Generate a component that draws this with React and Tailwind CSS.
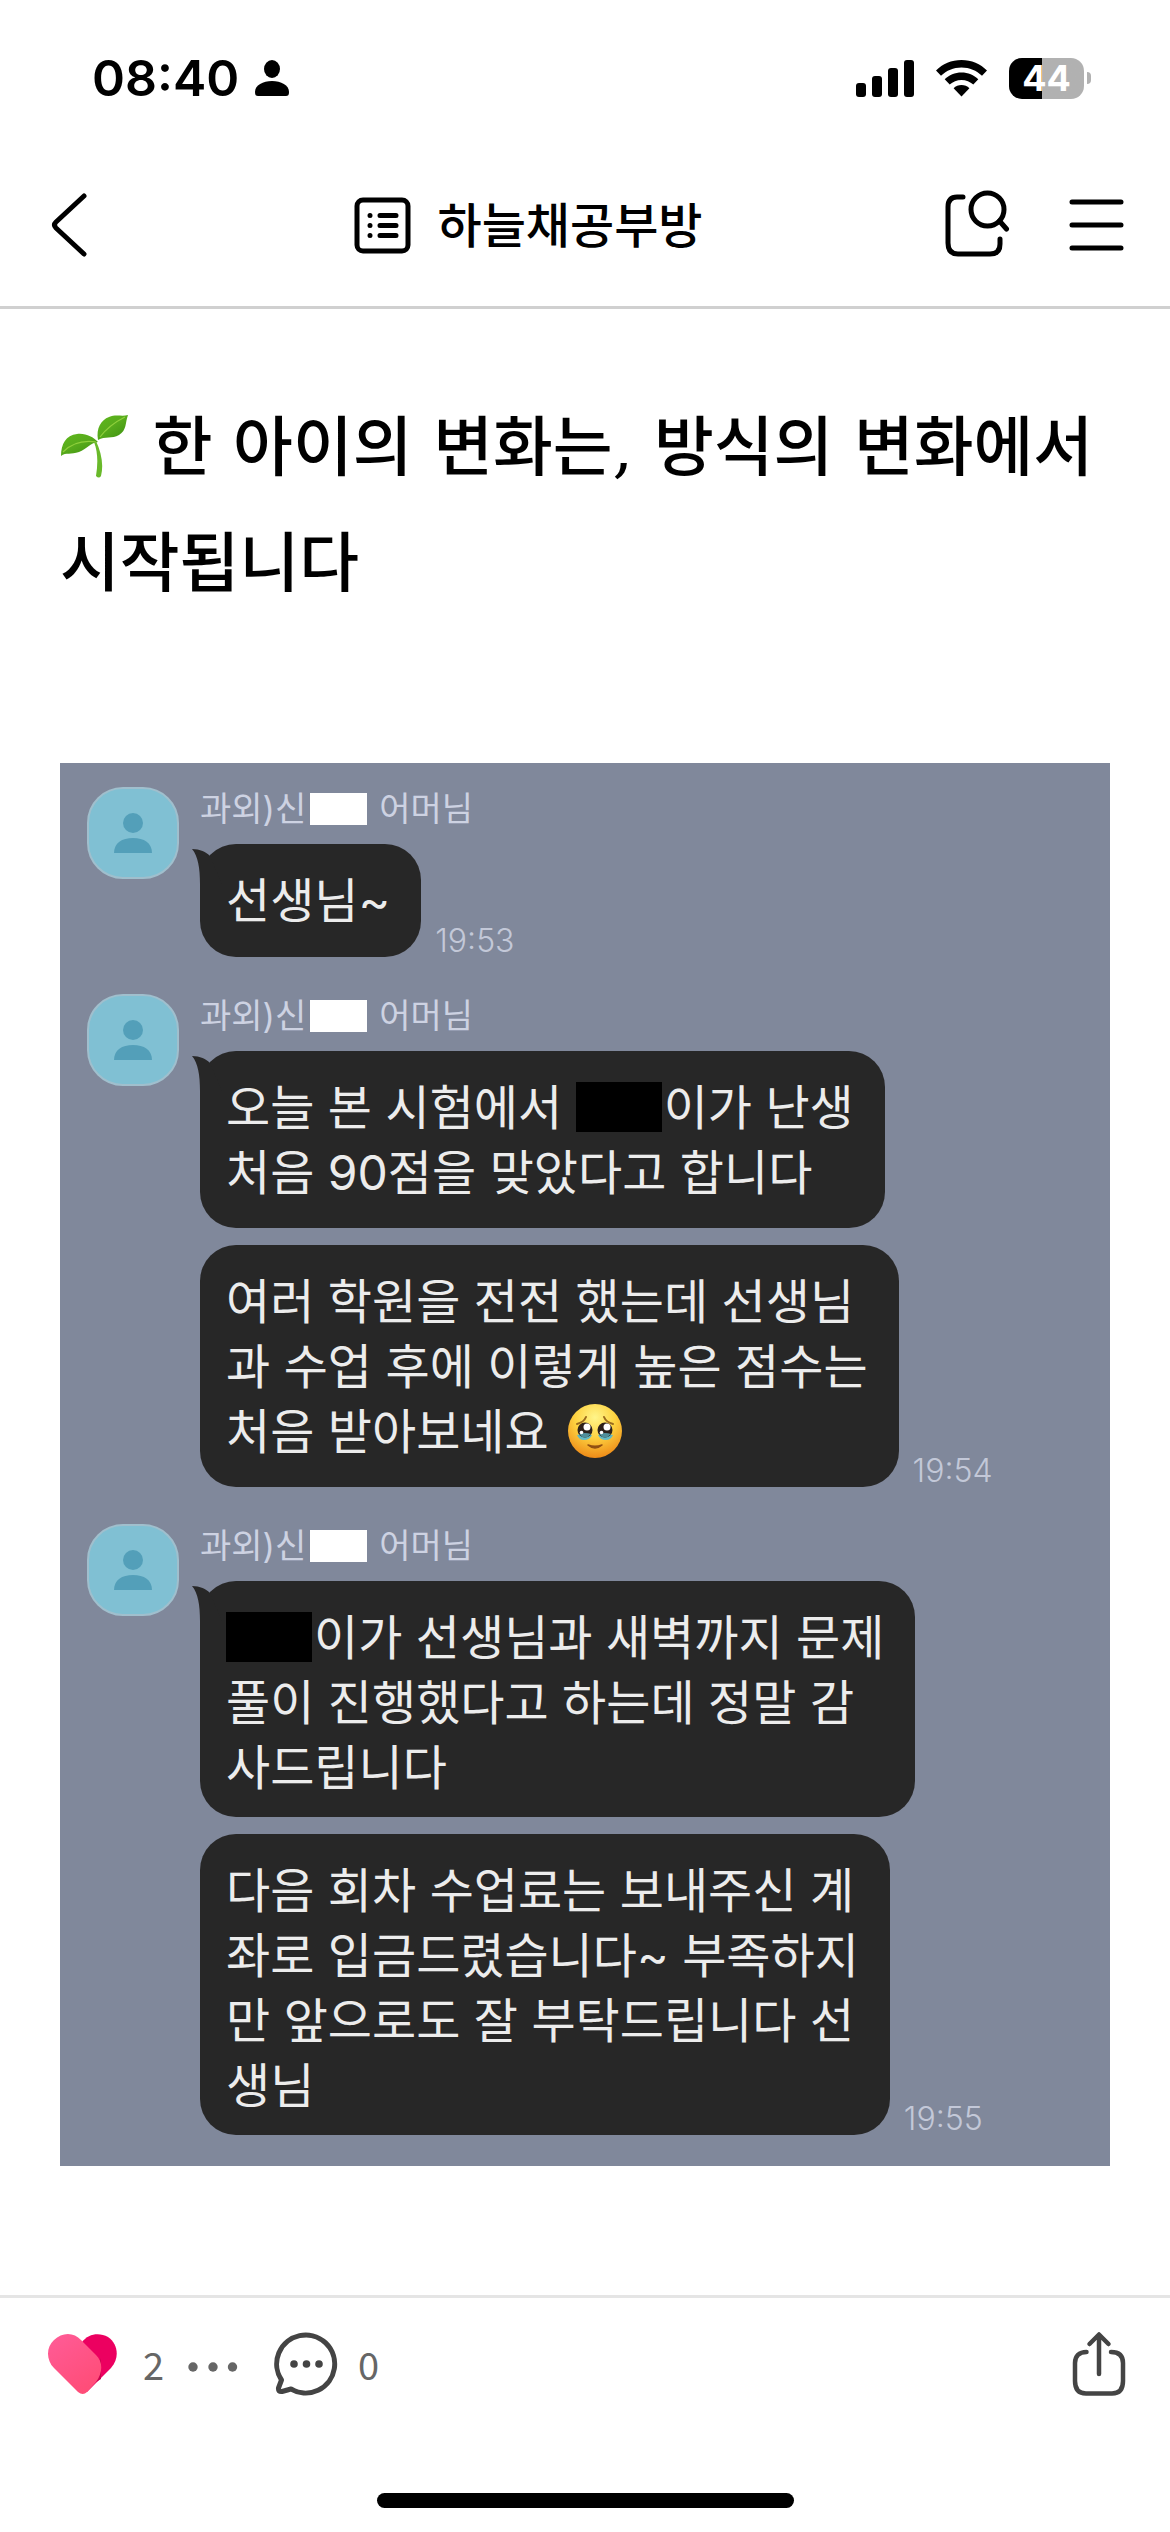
const threads = [
  {
    time: "19:53",
    messages: [{ lines: [["선생님~"]], padding: "pb-6" }],
  },
  {
    time: "19:54",
    messages: [
      {
        lines: [
          ["오늘 본 시험에서 ", "hidden", "이가 난생"],
          ["처음 90점을 맞았다고 합니다"],
        ],
        padding: "pb-[23px]",
      },
      {
        lines: [
          ["여러 학원을 전전 했는데 선생님"],
          ["과 수업 후에 이렇게 높은 점수는"],
          ["처음 받아보네요 ", "pleading"],
        ],
        padding: "pb-[23px]",
      },
    ],
  },
  {
    time: "19:55",
    messages: [
      {
        lines: [
          ["hidden", "이가 선생님과 새벽까지 문제"],
          ["풀이 진행했다고 하는데 정말 감"],
          ["사드립니다"],
        ],
        padding: "pb-[17px]",
      },
      {
        lines: [
          ["다음 회차 수업료는 보내주신 계"],
          ["좌로 입금드렸습니다~ 부족하지"],
          ["만 앞으로도 잘 부탁드립니다 선"],
          ["생님"],
        ],
        padding: "pb-[17px]",
      },
    ],
  },
];

const Wifi = () => (
  <svg viewBox="0 0 51 37" className="h-[37px] w-[51px]">
    <path d="M25.500 0C35.500 0 44.500 4 51 10.500L46 15.800C40.500 10.500 33.500 7.500 25.500 7.500S10.500 10.500 5 15.800L0 10.500C6.500 4 15.500 0 25.500 0Z" />
    <path d="M25.500 12.500C32 12.500 38 15 42.300 19.300L37.300 24.600C34.200 21.700 30 20 25.500 20S16.800 21.700 13.700 24.600L8.700 19.300C13 15 19 12.500 25.500 12.500Z" />
    <path d="M25.500 25C28.500 25 31.300 26.200 33.400 28.200L25.500 36.500L17.600 28.200C19.700 26.200 22.500 25 25.500 25Z" />
  </svg>
);

const Sprout = () => (
  <svg viewBox="0 0 68 64" className="mr-1 inline-block h-16 w-[68px] align-[-8px]">
    <defs>
      <linearGradient id="leaf" x1="0" y1="0" x2="0.8" y2="1">
        <stop offset="0" stopColor="#5fb81d" />
        <stop offset="0.5" stopColor="#58ab1c" />
        <stop offset="1" stopColor="#3f9312" />
      </linearGradient>
    </defs>
    <path d="M36 27C41 38 44 50 41 62Q39 65 36 62C38 50 38 38 34 28Z" fill="#69b92a" />
    <path d="M1 42C1 30 6 21 17 20C26 19 33 23 38 28C30 29 27 35 19 38C11 41 6 38 1 42Z" fill="url(#leaf)" />
    <path d="M38 26C36 14 41 6 49 3C56 0 62 3 68 1C65 9 67 16 59 21C52 25 45 22 38 26Z" fill="url(#leaf)" />
    <path d="M3 38C11 30 22 26 36 28M40 23C46 15 55 8 65 3" fill="none" stroke="#8fd03c" strokeWidth="1.200" />
  </svg>
);

const PleadingFace = () => (
  <svg viewBox="0 0 54 54" className="ml-1.5 inline-block size-[54px] align-[-9px]">
    <defs>
      <radialGradient id="face" cx="0.5" cy="0.25" r="0.75">
        <stop offset="0" stopColor="#fff58a" />
        <stop offset="0.5" stopColor="#fdd240" />
        <stop offset="1" stopColor="#ee8b18" />
      </radialGradient>
    </defs>
    <circle cx="27" cy="27" r="27" fill="url(#face)" />
    <path d="M9 20Q16 18 18 13M45 20Q38 18 36 13" fill="none" stroke="#9a6a1c" strokeWidth="2" strokeLinecap="round" />
    <path d="M9 31Q17 29 24 31Q22 36 16 36Q11 36 9 31M30 31Q37 29 45 31Q43 36 38 36Q32 36 30 31" fill="#62b9c4" />
    <circle cx="17" cy="26" r="7.500" fill="#2c211c" />
    <circle cx="37" cy="26" r="7.500" fill="#2c211c" />
    <path d="M11 30Q17 28 23 30Q17 37 11 30M31 30Q37 28 43 30Q37 37 31 30" fill="#4f8f9c" />
    <circle cx="19" cy="23" r="3.500" fill="#fff" />
    <circle cx="39" cy="23" r="3.500" fill="#fff" />
    <circle cx="13.500" cy="28.500" r="1.800" fill="#fff" />
    <circle cx="33.500" cy="28.500" r="1.800" fill="#fff" />
    <path d="M20 41Q27 47 34 41Q27 43.500 20 41Z" fill="#8f4f12" stroke="#8f4f12" strokeWidth="1.500" strokeLinejoin="round" />
  </svg>
);

const StatusBar = () => (
  <div className="flex h-[140px] items-center justify-between pt-4 pr-[79px] pl-[92px]">
    <div className="flex items-center gap-4">
      <span className="font-['Inter',sans-serif] text-[50px] leading-[60px] font-semibold">08:40</span>
      <svg viewBox="0 0 34 36" className="h-9 w-[34px]">
        <ellipse cx="17" cy="9" rx="8" ry="9" />
        <path d="M0 32C0 25 8 21 17 21S34 25 34 32C34 35 33 36 31 36H3C1 36 0 35 0 32Z" />
      </svg>
    </div>
    <div className="flex items-center">
      <svg viewBox="0 0 58 37" className="h-[37px] w-[58px]">
        <rect x="0" y="23" width="10" height="14" rx="3" />
        <rect x="16" y="16" width="10" height="21" rx="3" />
        <rect x="32" y="8" width="10" height="29" rx="3" />
        <rect x="48" y="0" width="10" height="37" rx="3" />
      </svg>
      <div className="mr-[22px] ml-[22px]">
        <Wifi />
      </div>
      <div className="flex h-[41px] w-[75px] items-center justify-center rounded-[13px] bg-linear-to-r from-black from-44% to-[#b1b1b1] to-44% font-['Inter',sans-serif] text-[36px] leading-none font-bold text-white">
        44
      </div>
      <div className="ml-[3px] h-3 w-1 rounded-r-full bg-[#b1b1b1]" />
    </div>
  </div>
);

const Header = () => (
  <header className="flex h-[169px] items-center justify-between border-b-3 border-[#d0d0d0] px-[46px] pt-1">
    <button type="button" aria-label="뒤로" className="w-[65px] pl-1">
      <svg viewBox="0 0 38 66" className="h-[66px] w-[38px]" fill="none" stroke="#000" strokeWidth="5" strokeLinecap="round" strokeLinejoin="round">
        <path d="M34 4L6 30Q3 33 6 36L34 62" />
      </svg>
    </button>
    <h1 className="flex items-center gap-[27px] text-[48px] leading-[60px] font-medium">
      <svg viewBox="0 0 57 57" className="size-[57px]" fill="none" stroke="#000" strokeWidth="5" strokeLinecap="round">
        <rect x="3" y="3" width="51" height="51" rx="6" />
        <path d="M26 18.500H42M26 28.500H42M26 38.500H42M16 18.500h.01M16 28.500h.01M16 38.500h.01" />
      </svg>
      <span className="pb-1.5">하늘채공부방</span>
    </h1>
    <div className="flex items-center">
      <button type="button" aria-label="검색" className="mr-[59px] pb-1">
        <svg viewBox="0 0 65 68" className="h-[68px] w-[65px]" fill="none" stroke="#000" strokeWidth="5" strokeLinecap="round">
          <path d="M18 8H12Q3 8 3 18V54Q3 65 13 65H45Q55 65 55 55V50" />
          <circle cx="42.500" cy="20.500" r="16.500" />
          <path d="M54.500 32L61.500 40" />
        </svg>
      </button>
      <button type="button" aria-label="메뉴">
        <svg viewBox="0 0 55 54" className="h-[54px] w-[55px]" stroke="#000" strokeWidth="5" strokeLinecap="round">
          <path d="M3 4H52M3 27H52M3 50H52" />
        </svg>
      </button>
    </div>
  </header>
);

const Segment = ({ value }) => {
  if (value === "hidden") {
    return <span className="mr-0.5 inline-block h-[50px] w-[86px] bg-black align-[-7px]" />;
  }
  if (value === "pleading") {
    return <PleadingFace />;
  }
  return value;
};

const Bubble = ({ message, hasTail, time }) => (
  <div className="flex items-end gap-[14px]">
    <div
      className={`relative rounded-[36px] bg-[#272727] pt-6 pr-[31px] pl-[26px] text-[48px] leading-[65px] whitespace-pre text-[#ececec] ${message.padding}`}
    >
      {hasTail ? (
        <svg viewBox="0 0 30 36" className="absolute top-1 -left-2 h-9 w-[30px]" fill="#272727">
          <path d="M0 1C8 1 14 4 18 8L30 36H8C8 20 6 8 0 1Z" />
        </svg>
      ) : null}
      {message.lines.map((line, index) => (
        <p key={index} className="relative h-[65px]">
          {line.map((value) => (
            <Segment key={value} value={value} />
          ))}
        </p>
      ))}
    </div>
    {time ? <time className="text-[32px] leading-8 font-light text-[#c3c8d8]">{time}</time> : null}
  </div>
);

const Thread = ({ thread }) => (
  <li className="flex gap-[21px]">
    <div className="flex size-[92px] shrink-0 items-center justify-center rounded-[36px] border-2 border-[#a0bfcd] bg-[#80c0d3]">
      <svg viewBox="0 0 38 40" className="h-10 w-[38px]" fill="#539fb9">
        <circle cx="19" cy="10" r="10" />
        <path d="M0 40C0 30 8 25 19 25S38 30 38 40Z" />
      </svg>
    </div>
    <div>
      <p className="mb-[13px] flex h-11 items-center text-[34px] leading-[44px] text-[#cdd2e2]">
        과외)신
        <span className="mr-3 ml-1 h-8 w-[57px] bg-white" />
        어머님
      </p>
      <div className="flex flex-col gap-[17px]">
        {thread.messages.map((message, index) => (
          <Bubble
            key={index}
            message={message}
            hasTail={index === 0}
            time={index === thread.messages.length - 1 ? thread.time : null}
          />
        ))}
      </div>
    </div>
  </li>
);

const ActionBar = () => (
  <footer className="border-t-3 border-[#e5e5e5]">
    <div className="flex h-[132px] items-center pr-[44px] pl-12 text-[38px] leading-[44px] text-[#666]">
      <button type="button" className="flex items-center gap-[26px]" aria-label="좋아요 2">
        <svg viewBox="0 0 69 60" className="h-[60px] w-[69px]">
          <defs>
            <linearGradient id="heart" x1="0" y1="0" x2="0.6" y2="1">
              <stop offset="0" stopColor="#ff5c98" />
              <stop offset="1" stopColor="#ff4d78" />
            </linearGradient>
          </defs>
          <path d="M34 8C40 0 51-2 60 3C70 10 72 24 63 34L39 58H30Z" fill="#ec0060" />
          <path d="M53 24V45L45 50Z" fill="#c9004e" />
          <path d="M6 34C-2 26-2 13 6 6C14-2 26-2 33 6L48 21C55 28 55 38 48 48L39 58Q35 62 30 58Z" fill="url(#heart)" />
        </svg>
        <span>2</span>
      </button>
      <button type="button" aria-label="더보기" className="ml-6">
        <svg viewBox="0 0 50 10" className="mt-1.5 h-2.5 w-[50px]" fill="#666">
          <circle cx="5" cy="5" r="4.700" />
          <circle cx="25" cy="5" r="4.700" />
          <circle cx="44.500" cy="5" r="4.700" />
        </svg>
      </button>
      <button type="button" className="ml-9 flex items-center gap-5" aria-label="댓글 0">
        <svg viewBox="0 0 64 64" className="size-16" fill="none" stroke="#444" strokeWidth="5" strokeLinejoin="round">
          <path d="M7.500 48A29 29 0 1 1 17 57L8 59.500Q4 60 4.500 56Z" />
          <g fill="#444" stroke="none">
            <circle cx="20" cy="32" r="3.800" />
            <circle cx="32.500" cy="32" r="3.800" />
            <circle cx="45" cy="32" r="3.800" />
          </g>
        </svg>
        <span>0</span>
      </button>
      <button type="button" aria-label="공유" className="ml-auto">
        <svg viewBox="0 0 54 66" className="h-[66px] w-[54px]" fill="none" stroke="#444" strokeWidth="4.500" strokeLinecap="round" strokeLinejoin="round">
          <path d="M14.500 21C7 21 3 25 3 32V50Q3 62.500 14 62.500H40Q51 62.500 51 50V32C51 25 47 21 39 21" />
          <path d="M27 43V4M17.500 13L27 3.500L36.500 13" />
        </svg>
      </button>
    </div>
    <div className="flex h-[102px] items-end justify-center pb-6">
      <div className="h-[15px] w-[417px] rounded-full bg-black" />
    </div>
  </footer>
);

const App = () => (
  <div className="bg-white font-['Noto_Sans_CJK_KR',sans-serif] text-black">
    <StatusBar />
    <Header />
    <main className="px-[60px] pt-[81px] pb-[129px]">
      <h2 className="mb-[141px] font-['DejaVu_Serif','Noto_Sans_CJK_KR',serif] text-[65px] leading-[116px] font-medium break-keep">
        <Sprout /> 한 아이의 변화는, 방식의 변화에서 시작됩니다
      </h2>
      <ul className="flex flex-col gap-[37px] bg-[#80889b] px-[27px] pt-6 pb-[31px] font-['Inter','Noto_Sans_CJK_KR',sans-serif]">
        {threads.map((thread) => (
          <Thread key={thread.time} thread={thread} />
        ))}
      </ul>
    </main>
    <ActionBar />
  </div>
);

export default App;
